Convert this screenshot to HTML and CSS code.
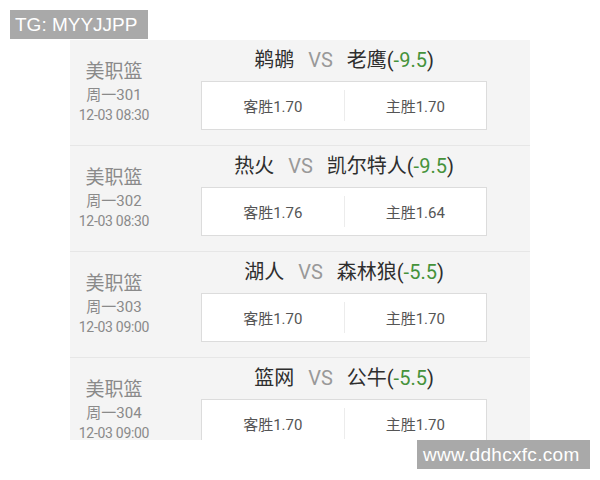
FILE: index.html
```html
<!DOCTYPE html>
<html lang="zh-CN">
<head>
    <meta charset="UTF-8">
    <title>美职篮</title>
    <link rel="stylesheet" href="styles.css">
</head>
<body>

    <!-- Watermarks -->
    <div class="mark mark-top">TG: MYYJJPP</div>
    <div class="mark mark-bottom">www.ddhcxfc.com</div>

    <!-- Match list -->
    <div class="panel">
        <div class="match">
            <div class="info">
                <div class="league">美职篮</div>
                <div class="num">周一301</div>
                <div class="time">12-03 08:30</div>
            </div>
            <div class="game">
                <div class="teams">鹈鹕<span class="vs">VS</span>老鹰(<span class="handicap">-9.5</span>)</div>
                <div class="odds">
                    <div class="odd">客胜1.70</div>
                    <div class="odd odd-home">主胜1.70</div>
                </div>
            </div>
        </div>

        <div class="match">
            <div class="info">
                <div class="league">美职篮</div>
                <div class="num">周一302</div>
                <div class="time">12-03 08:30</div>
            </div>
            <div class="game">
                <div class="teams">热火<span class="vs">VS</span>凯尔特人(<span class="handicap">-9.5</span>)</div>
                <div class="odds">
                    <div class="odd">客胜1.76</div>
                    <div class="odd odd-home">主胜1.64</div>
                </div>
            </div>
        </div>

        <div class="match">
            <div class="info">
                <div class="league">美职篮</div>
                <div class="num">周一303</div>
                <div class="time">12-03 09:00</div>
            </div>
            <div class="game">
                <div class="teams">湖人<span class="vs">VS</span>森林狼(<span class="handicap">-5.5</span>)</div>
                <div class="odds">
                    <div class="odd">客胜1.70</div>
                    <div class="odd odd-home">主胜1.70</div>
                </div>
            </div>
        </div>

        <div class="match">
            <div class="info">
                <div class="league">美职篮</div>
                <div class="num">周一304</div>
                <div class="time">12-03 09:00</div>
            </div>
            <div class="game">
                <div class="teams">篮网<span class="vs">VS</span>公牛(<span class="handicap">-5.5</span>)</div>
                <div class="odds">
                    <div class="odd">客胜1.70</div>
                    <div class="odd odd-home">主胜1.70</div>
                </div>
            </div>
        </div>
    </div>

</body>
</html>
```

FILE: styles.css
```css
/* General reset */
* {
    margin: 0;
    padding: 0;
    box-sizing: border-box;
}

body {
    background-color: #ffffff;
    font-family: Roboto, "Noto Sans CJK SC", sans-serif;
    padding-top: 40px;
}

/* Watermark badges */
.mark {
    position: absolute;
    background-color: #a9a9a9;
    color: #ffffff;
    font-family: "Liberation Sans", Arial, sans-serif;
    font-size: 19px;
    height: 29px;
    line-height: 29px;
    white-space: nowrap;
}

.mark-top {
    top: 10px;
    left: 10px;
    width: 138px;
    padding-left: 5px;
}

.mark-bottom {
    top: 440px;
    left: 417px;
    width: 173px;
    padding-left: 6px;
    letter-spacing: 0.3px;
    z-index: 2;
}

/* Panel */
.panel {
    width: 460px;
    height: 400px;
    margin-left: 70px;
    background-color: #f4f4f4;
    overflow: hidden;
}

.match {
    display: flex;
    height: 106px;
    border-bottom: 1px solid #e6e6e6;
}

/* Left column */
.info {
    width: 88px;
    padding-top: 19px;
    text-align: center;
    color: #8a8a8a;
}

.league {
    font-size: 19px;
    line-height: 26px;
}

.num {
    font-size: 15px;
    line-height: 20px;
}

.time {
    font-size: 14px;
    line-height: 21px;
    letter-spacing: -0.3px;
}

/* Right column */
.game {
    flex: 1;
    padding-top: 6px;
}

.teams {
    text-align: center;
    font-size: 20px;
    line-height: 28px;
    color: #2e2e2e;
}

.vs {
    color: #999999;
    margin: 0 14px;
}

.handicap {
    color: #45923a;
}

.odds {
    display: flex;
    width: 286px;
    height: 49px;
    margin: 7px auto 0;
    background-color: #ffffff;
    border: 1px solid #dcdcdc;
}

.odd {
    flex: 1;
    display: flex;
    align-items: center;
    justify-content: center;
    font-size: 15px;
    color: #555555;
}

.odd-home {
    border-left: 1px solid #ececec;
    margin: 8px 0;
}
```
